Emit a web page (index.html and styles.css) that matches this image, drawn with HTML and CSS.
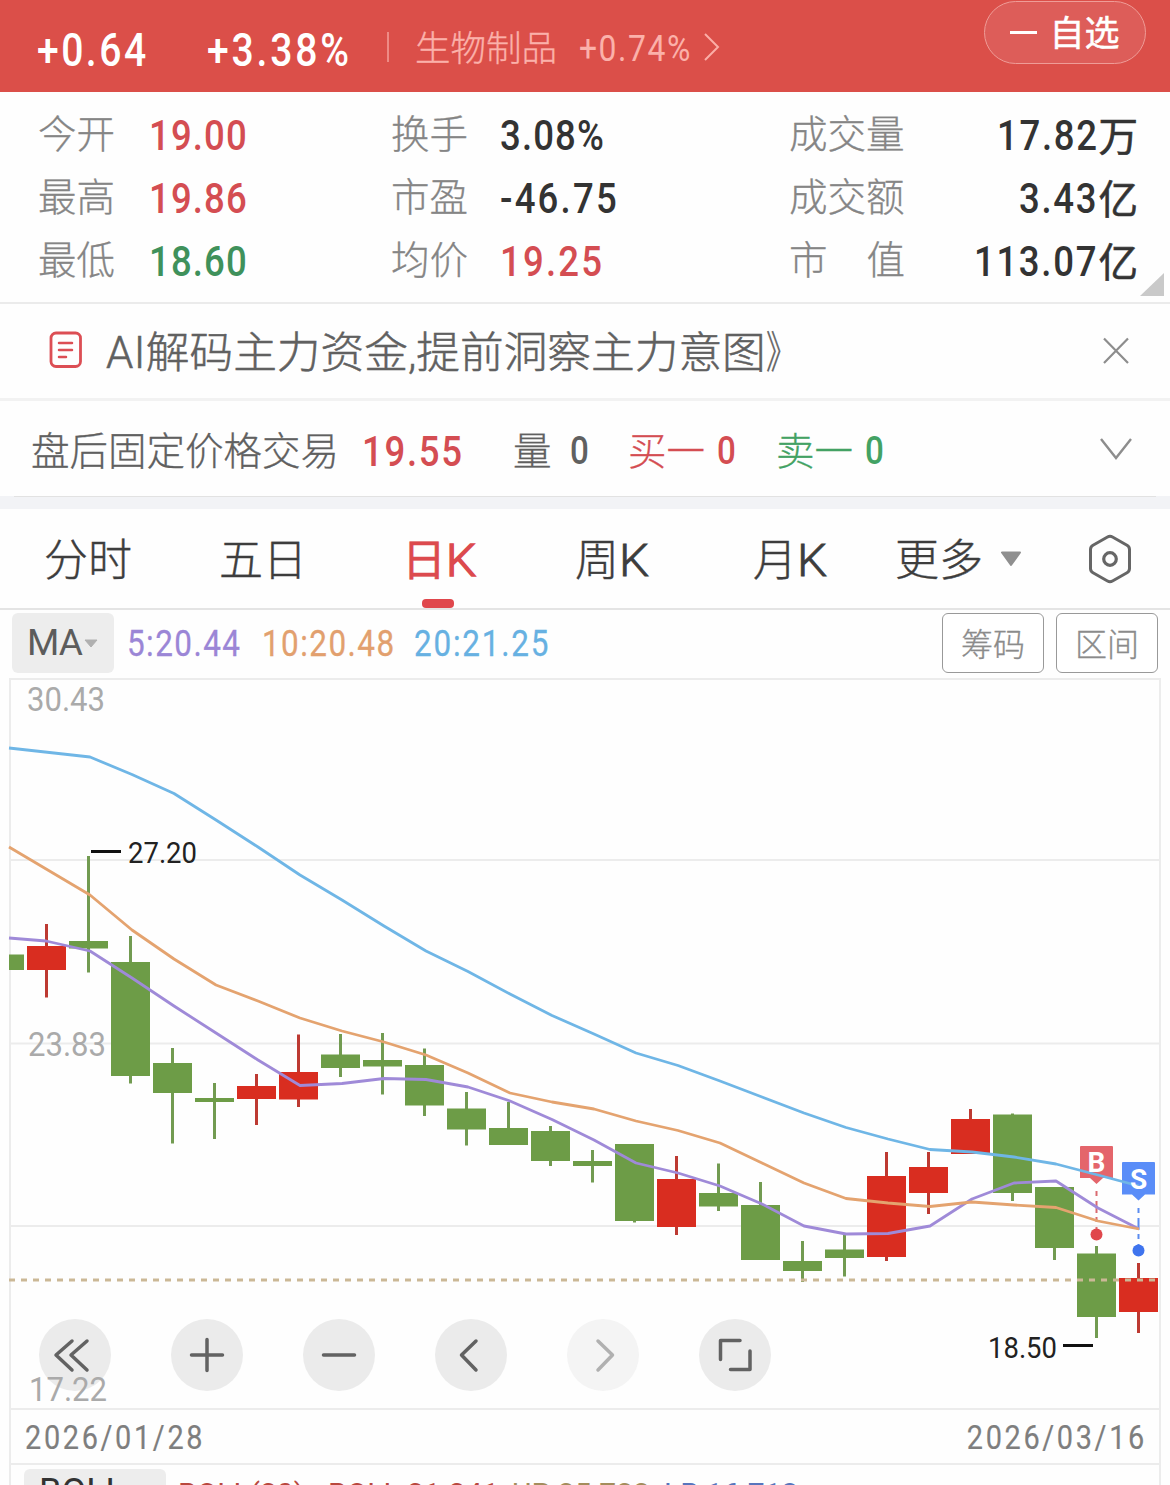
FILE: index.html
```html
<!DOCTYPE html>
<html lang="zh-CN">
<head>
<meta charset="utf-8">
<title>日K</title>
<link rel="stylesheet" href="styles.css">
</head>
<body>
<div class="app">
  <header class="top">
    <span class="num change">+0.64</span>
    <span class="num percent">+3.38%</span>
    <i class="divider"></i>
    <span class="sector">生物制品</span>
    <span class="num sector-change">+0.74%</span>
    <svg class="sector-arrow" width="18" height="30" viewBox="0 0 18 30"><path d="M2 2L15 15L2 28" fill="none" stroke="#fbaea7" stroke-width="2"/></svg>
    <button class="watch"><i></i><span>自选</span></button>
  </header>

  <section class="stats">
    <span class="label">今开</span><span class="num red">19.00</span>
    <span class="label">换手</span><span class="num">3.08%</span>
    <span class="label">成交量</span><span class="amount"><b class="num">17.82</b>万</span>
    <span class="label">最高</span><span class="num red">19.86</span>
    <span class="label">市盈</span><span class="num wide">-46.75</span>
    <span class="label">成交额</span><span class="amount"><b class="num">3.43</b>亿</span>
    <span class="label">最低</span><span class="num green">18.60</span>
    <span class="label">均价</span><span class="num red wide">19.25</span>
    <span class="label spread"><span>市</span><span>值</span></span><span class="amount"><b class="num">113.07</b>亿</span>
    <i class="corner"></i>
  </section>

  <section class="notice">
    <svg class="doc" width="34" height="38" viewBox="0 0 34 38" fill="none" stroke="#dc4e54" stroke-width="2.800"><rect x="2" y="2" width="29.500" height="33.500" rx="5"/><path d="M10 12H23M10 19H23M10 26H17" stroke-linecap="round" stroke-width="2.500"/></svg>
    <span class="notice-text"><em>AI</em>解码主力资金,提前洞察主力意图<span class="close-mark">》</span></span>
    <svg class="end" width="28" height="28" viewBox="0 0 28 28"><path d="M2 1.500L26 26M26 1.500L2 26" stroke="#8d8d8d" stroke-width="2.200"/></svg>
  </section>

  <section class="after">
    <span class="after-name">盘后固定价格交易</span>
    <span class="num red after-price">19.55</span>
    <span class="q1">量</span><span class="num zero z1">0</span>
    <span class="q2">买一</span><span class="num zero z2">0</span>
    <span class="q3">卖一</span><span class="num zero z3">0</span>
    <svg class="end" width="34" height="24" viewBox="0 0 34 24"><path d="M2 2L17 21L32 2" fill="none" stroke="#8d8d8d" stroke-width="2.400"/></svg>
  </section>
  <div class="gap"><i></i></div>

  <nav class="tabs">
    <span>分时</span><span>五日</span><span class="active">日<em>K</em></span><span>周<em>K</em></span><span>月<em>K</em></span><span>更多</span>
    <svg class="more" width="22" height="16" viewBox="0 0 22 16"><path d="M2 1.500H20L11 14Z" fill="#8f8f8f" stroke="#8f8f8f" stroke-width="2" stroke-linejoin="round"/></svg>
    <svg class="gear" width="44" height="50" viewBox="0 0 44 50" fill="none" stroke="#666" stroke-width="3"><path d="M19.500 3Q22 1.600 24.500 3L39 11.200Q41.500 12.600 41.500 15.500V34.500Q41.500 37.400 39 38.800L24.500 47Q22 48.400 19.500 47L5 38.800Q2.500 37.400 2.500 34.500V15.500Q2.500 12.600 5 11.200Z"/><circle cx="22" cy="25" r="6.300" stroke-width="3.200"/></svg>
  </nav>

  <section class="ma">
    <span class="ma-tag">MA<svg width="14" height="9" viewBox="0 0 14 9"><path d="M1 1H13L7 8Z" fill="#b0b0b0" stroke="#b0b0b0" stroke-linejoin="round"/></svg></span>
    <span class="num m5">5:20.44</span>
    <span class="num m10">10:20.48</span>
    <span class="num m20">20:21.25</span>
    <button>筹码</button><button>区间</button>
  </section>

  <section class="chart">
    <div class="tools">
      <span><svg viewBox="0 0 72 72"><path d="M33 22L17 36L33 51M48 22L32 36L48 51"/></svg></span>
      <span><svg viewBox="0 0 72 72"><path d="M36 20.500V51.500M20.500 36H51.500"/></svg></span>
      <span><svg viewBox="0 0 72 72"><path d="M20.500 36H51.500"/></svg></span>
      <span><svg viewBox="0 0 72 72"><path d="M41 22L26.500 36L41 51"/></svg></span>
      <span class="off"><svg viewBox="0 0 72 72"><path d="M31 22L45.500 36L31 51"/></svg></span>
      <span><svg viewBox="0 0 72 72"><path d="M21.500 40.500V21.500H41M51 32V50.500H31.500"/></svg></span>
    </div>
    <svg class="plot" width="1170" height="733" viewBox="0 677 1170 733">
      <path fill="none" stroke="#ececec" stroke-width="2" d="M10 1409V679H1160V1409ZM10 860H1160M10 1043.500H1160M10 1226H1160"/>
      <g fill="#aaa" font-size="33" font-weight="400">
        <text x="27" y="711" textLength="78" lengthAdjust="spacingAndGlyphs">30.43</text>
        <text x="28" y="1056" textLength="78" lengthAdjust="spacingAndGlyphs">23.83</text>
        <text x="29" y="1401" textLength="78" lengthAdjust="spacingAndGlyphs">17.22</text>
      </g>
      <g id="candles"></g>
      <path d="M91 851.500H121M1063 1345.500H1093" stroke="#111" stroke-width="3"/>
      <g fill="#222" font-size="30" font-weight="400">
        <text x="128" y="863" textLength="69" lengthAdjust="spacingAndGlyphs">27.20</text>
        <text x="988" y="1357.500" textLength="69" lengthAdjust="spacingAndGlyphs">18.50</text>
      </g>
      <g fill="none" stroke-width="2" stroke-dasharray="5 5 12 4"><path d="M1096.500 1191V1230" stroke="#d96a70"/><path d="M1138.500 1208V1246" stroke="#5b8cf0"/></g>
      <circle cx="1096.500" cy="1234.500" r="6" fill="#e0474c"/>
      <circle cx="1138.500" cy="1250.500" r="6" fill="#3f74ee"/>
      <path d="M1081 1146H1112Q1113 1146 1113 1147V1178H1103L1096.500 1184L1090 1178H1080V1147Q1080 1146 1081 1146Z" fill="#e4656b"/>
      <path d="M1123 1162H1154Q1155 1162 1155 1163V1194.500H1145L1138.500 1200.500L1132 1194.500H1122V1163Q1122 1162 1123 1162Z" fill="#5a8df8"/>
      <g fill="none" stroke-width="2.800" stroke-linejoin="round">
        <path stroke="#6fb6e6" d="M9 748L90 757L132 774.500L174 793.500L216 820L258 847L300 875L342 900L384 926L426 951L468 971.500L510 994L552 1015.500L594 1034L636 1053L678 1065.500L720 1081L762 1097L804 1113L846 1127.500L888 1139L930 1149.500L972 1152L1014 1157L1056 1164L1098 1175L1139 1186"/>
        <path stroke="#9f8ad8" d="M9 938L46 941L90 951L132 978L174 1006L216 1033L258 1060L300 1085.500L342 1083.500L384 1078.500L426 1079.500L468 1087L510 1101L552 1119.500L594 1140L636 1163L678 1173L720 1186L762 1204L804 1226L846 1234L888 1233.500L930 1226L972 1199L1014 1183L1056 1181L1098 1208L1139 1229"/>
        <path stroke="#e4a36f" d="M9 847L90 895L132 930L174 959L216 985L258 1001L300 1018L342 1031L384 1042L426 1055L468 1073L510 1093L552 1102L594 1109L636 1121L678 1130.500L720 1143L762 1163L804 1183L846 1198.500L888 1203L930 1206.500L972 1202L1014 1205L1056 1207.500L1098 1221L1139 1229"/>
      </g>
      <path d="M9 1280H1158" stroke="#cbb896" stroke-width="3" stroke-dasharray="6 6"/>
      <g fill="#fff" font-size="28" font-weight="700" text-anchor="middle"><text x="1096.500" y="1172">B</text><text x="1138.500" y="1188.500">S</text></g>
    </svg>
  </section>

  <section class="dates"><span class="num">2026/01/28</span><span class="num right">2026/03/16</span></section>
  <section class="boll">
    <span class="boll-tag">BOLL</span>
    <span class="bv b1">BOLL(20)</span><span class="bv b2">BOLL:21.241</span><span class="bv b3">UP:25.722</span><span class="bv b4">LB:16.713</span>
  </section>
</div>
<script src="chart.js"></script>
</body>
</html>
```
FILE: chart.js
```js
// center x, wick top, wick bottom, body top, body bottom, rising
const candles = [
  [46.5,924,997.5,946,970,1],[88.5,856,972.5,941,948.5,0],[130.5,936,1083.5,962,1076,0],
  [172.5,1048,1143.5,1063,1093,0],[214.5,1083,1139,1098,1102,0],[256.5,1074,1125,1086,1099,1],
  [298.5,1034.5,1107,1072,1099.5,1],[340.5,1034,1077,1054.5,1068,0],[382.5,1033,1094.5,1060,1066.5,0],
  [424.5,1048.5,1116,1065,1105.5,0],[466.5,1092,1145.5,1108.5,1129.5,0],[508.5,1102,1145,1128,1145,0],
  [550.5,1126,1166,1131,1161,0],[592.5,1150,1182.5,1161,1166,0],[634.5,1144,1222.5,1144,1221,0],
  [676.5,1156,1235,1179,1227,1],[718.5,1163.5,1211,1193,1206.5,0],[760.5,1182,1260,1205,1260,0],
  [802.5,1241,1282,1261,1271,0],[844.5,1233,1276.5,1249.5,1258,0],[886.5,1152,1261,1176,1257,1],
  [928.5,1152,1214,1167,1193,1],[970.5,1109,1154,1119,1154,1],[1012.5,1113.5,1201,1114.5,1193,0],
  [1054.5,1187,1260,1187,1248,0],[1096.5,1246,1338,1253.5,1317,0],[1138.5,1263,1333,1278,1312,1]
];
let out = '<rect x="9" y="954.5" width="15" height="15.5" fill="#6d9c47"/>';
for (const [x, high, low, top, bottom, up] of candles) {
  const body = up ? '#d92d20' : '#6d9c47';
  const wick = up ? '#bd3a32' : '#729b51';
  out += `<rect x="${x - 1.5}" y="${high}" width="3" height="${low - high}" fill="${wick}"/>`;
  out += `<rect x="${x - 19.5}" y="${top}" width="39" height="${bottom - top}" fill="${body}"/>`;
}
document.getElementById('candles').innerHTML = out;
```
FILE: styles.css
```css
* { box-sizing: border-box; }
body { margin: 0; background: #fff; }
i, em { font-style: normal; }
svg { display: block; flex: none; }
button { font: inherit; padding: 0; margin: 0; }
.app {
  width: 1170px; height: 1485px; overflow: hidden; background: #fefefe;
  font-family: Roboto, "Noto Sans CJK SC", sans-serif; color: #333; font-weight: 300; white-space: nowrap;
}
.num {
  display: inline-block; font-family: Roboto, sans-serif; font-weight: 500;
  font-size: 43px; letter-spacing: 1.3px; transform: scaleX(.85); transform-origin: left center;
}
.num.wide { letter-spacing: 2.600px; }
.red { color: #d44d52; }
.green { color: #3f915b; }
.end { margin-left: auto; }

.top { height: 92px; background: #db4f49; color: #fff; display: flex; padding-left: 37px; line-height: 100px; }
.change { font-size: 46px; letter-spacing: 2.900px; width: 170px; }
.percent { font-size: 46px; letter-spacing: 3.300px; width: 180px; }
.divider { width: 2px; height: 30px; margin-top: 32px; background: #ee8b85; }
.sector { font-size: 35.500px; color: #fbb1aa; margin-left: 26px; width: 164px; line-height: 98px; -webkit-text-stroke: .3px; }
.sector-change { font-size: 37.500px; font-weight: 400; letter-spacing: 1.800px; color: #fbb1aa; width: 124px; line-height: 96px; }
.sector-arrow { margin-top: 32px; }
.watch {
  margin: 1px 24px 0 auto; width: 162px; height: 63px; border-radius: 32px; border: 1.500px solid #ef9c97;
  background: #dd5d59; color: #fff; font-size: 35px; font-weight: 400; line-height: 60px; -webkit-text-stroke: .5px;
  display: flex; align-items: center; justify-content: center; gap: 12px;
}
.watch i { width: 27px; height: 3px; background: #fff; }
.watch span { padding-top: 4px; }

.stats {
  position: relative; height: 212px; border-bottom: 2px solid #ebebeb; padding: 10px 32px 0 38px;
  display: grid; grid-template-columns: 111px 242px 109px 289px 116px 1fr; grid-template-rows: repeat(3, 63px);
}
.stats .num { line-height: 67px; }
.label { font-size: 38.500px; color: #858585; line-height: 65px; -webkit-text-stroke: .3px; }
.spread { display: flex; justify-content: space-between; }
.amount { display: flex; justify-content: flex-end; font-size: 39.500px; font-weight: 400; line-height: 71px; -webkit-text-stroke: .6px; }
.amount .num { transform-origin: right center; letter-spacing: 2px; -webkit-text-stroke: 0; }
.corner { position: absolute; right: 6px; bottom: 6px; width: 24px; height: 23px; background: #c9c9c9; clip-path: polygon(100% 0, 100% 100%, 0 100%); }

.notice { height: 97px; border-bottom: 3px solid #f2f2f2; padding: 0 40px 0 49px; display: flex; align-items: center; }
.notice .doc { margin-bottom: 3px; }
.notice-text { margin-left: 23px; font-size: 43.700px; color: #606060; line-height: 94px; padding-top: 3px; -webkit-text-stroke: .5px; }
.close-mark { display: inline-block; transform: scaleX(.7); transform-origin: left center; }
.notice-text em { letter-spacing: .4px; }

.after { height: 95px; padding: 0 37px 0 31px; display: flex; align-items: center; font-size: 38.500px; line-height: 89px; color: #606060; -webkit-text-stroke: .3px; }
.after > span { padding-top: 6px; }
.after .num { -webkit-text-stroke: 0; }
.after-name { width: 331px; }
.after-price { width: 151px; letter-spacing: 2px; }
.q1 { width: 57px; }
.after .zero { font-size: 39px; font-weight: 500; }
.z1 { width: 58px; }
.q2, .z2 { color: #d44d52; }
.q3, .z3 { color: #43a264; }
.q2, .q3 { width: 89px; }
.z2 { width: 59px; }
.gap { height: 13px; background: #f2f3f6; }
.gap i { display: block; height: 1px; margin: 0 14px; background: #e2e2e2; }

.tabs {
  height: 101px; border-bottom: 2px solid #e4e4e4; padding-left: 44px; display: grid;
  grid-template-columns: 175px 183px 173px 178px 142px 105px 88px 1fr; align-items: center;
  font-size: 44px; color: #3d3d3d; line-height: 95px; -webkit-text-stroke: .4px;
}
.tabs > span { padding-top: 4px; }
.tabs em { display: inline-block; font-size: 45px; transform: scaleX(1.06); transform-origin: left center; -webkit-text-stroke: .8px; }
.tabs .active { position: relative; color: #dc4a4e; font-weight: 400; -webkit-text-stroke: .5px; }
.tabs .active em { font-weight: 300; -webkit-text-stroke: 1.500px; }
.active::after { content: ""; position: absolute; left: 20px; bottom: 1px; width: 32px; height: 9px; border-radius: 4px; background: #e0474c; }

.ma { height: 67px; padding: 3px 12px 4px; display: flex; align-items: center; }
.ma-tag { width: 102px; height: 60px; border-radius: 6px; background: #ededed; display: flex; align-items: center; gap: 2px; padding-left: 15px; font-size: 37px; font-weight: 400; letter-spacing: -1px; color: #5c5c5c; line-height: 64px; }
.ma .num { font-size: 37px; font-weight: 400; letter-spacing: 1.700px; margin-top: 1px; -webkit-text-stroke: .3px; }
.ma .m5 { color: #9b86d6; margin-left: 13px; width: 135px; }
.ma .m10 { color: #e2a06e; width: 152px; }
.ma .m20 { color: #67b1e2; width: 140px; letter-spacing: 2.100px; }
.ma button { width: 102px; height: 60px; border: 1.500px solid #999; border-radius: 6px; background: #fff; color: #8b8b8b; font-size: 32px; font-weight: 300; margin-left: 12px; padding-top: 3px; line-height: 54px; -webkit-text-stroke: .3px; }
.ma .m20 + button { margin-left: auto; }

.chart { position: relative; height: 733px; }
.plot { position: absolute; left: 0; top: 0; }
.tools { position: absolute; left: 39px; top: 642px; display: flex; gap: 60px; }
.tools span { width: 72px; height: 72px; border-radius: 50%; background: #ebebeb; }
.tools path { fill: none; stroke: #626262; stroke-width: 3.500; stroke-linecap: round; stroke-linejoin: round; }
.tools .off { background: #f4f4f4; }
.tools .off path { stroke: #b0b0b0; }

.dates { height: 55px; margin: 0 9px; border: 2px solid #ececec; border-top: 0; padding: 0 14px; display: flex; justify-content: space-between; line-height: 55px; }
.dates .num { font-size: 34px; font-weight: 400; letter-spacing: 3.100px; color: #7e7e7e; -webkit-text-stroke: .2px; }
.dates .right { transform-origin: right center; margin-right: -2px; }
.boll { height: 20px; margin: 0 9px; border: solid #ececec; border-width: 0 2px; padding: 4px 0 0 13px; display: flex; font-size: 36px; overflow: hidden; }
.boll-tag { width: 142px; height: 60px; flex: none; border-radius: 6px 6px 0 0; background: #ededed; padding-left: 15px; line-height: 47px; font-weight: 400; }
.bv { font-size: 30px; font-weight: 400; line-height: 50px; flex: none; }
.b1 { margin-left: 12px; width: 150px; color: #b9483e; }
.b2 { width: 184px; color: #b9483e; }
.b3 { width: 152px; color: #a48d5c; }
.b4 { color: #5875bd; }
```
